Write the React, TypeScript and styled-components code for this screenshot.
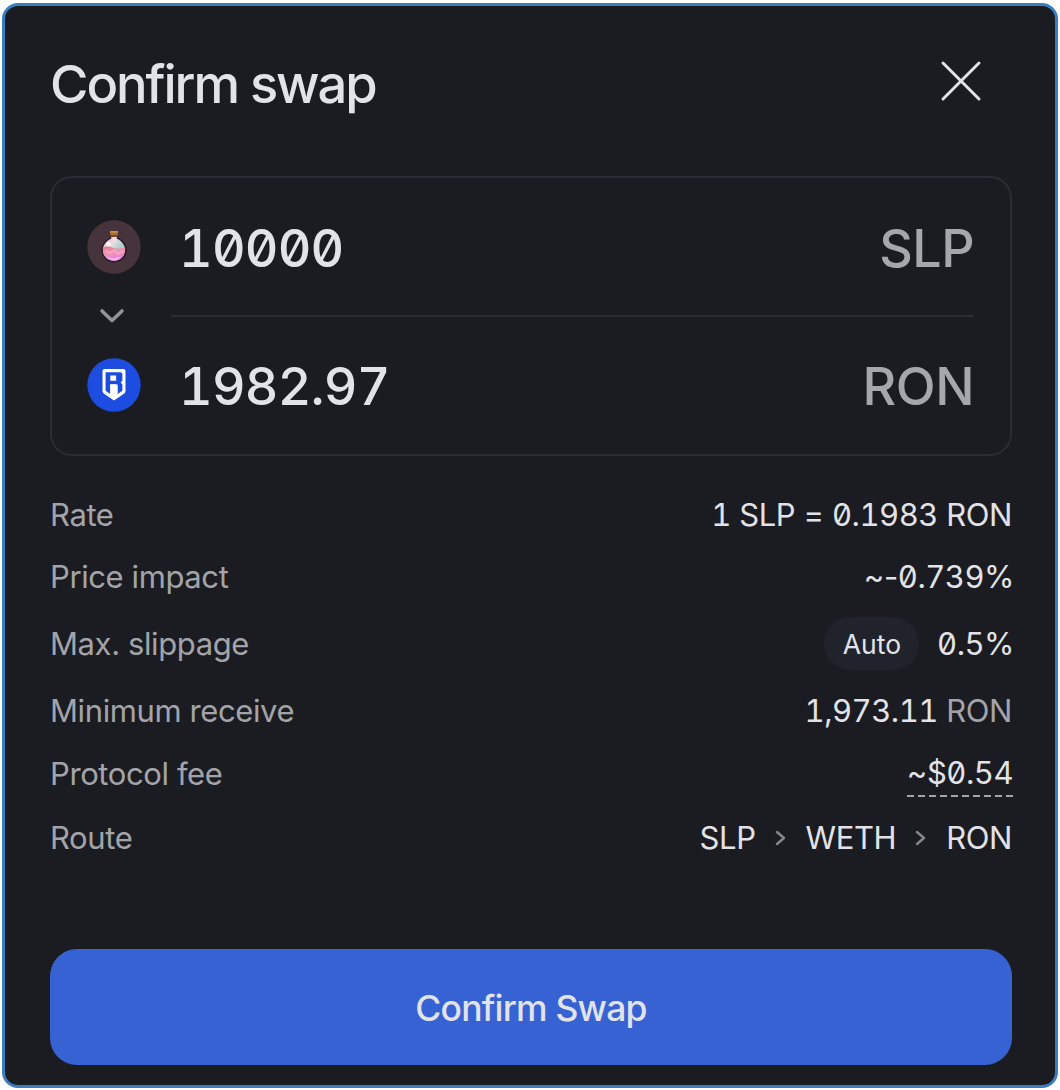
import React from "react";
import styled, { createGlobalStyle } from "styled-components";

const GlobalStyle = createGlobalStyle`
  * {
    box-sizing: border-box;
  }
  body {
    margin: 0;
    background: #fff;
    font-family: "Inter", sans-serif;
    color: #e2e3e8;
  }
`;

interface TokenProps {
  icon: React.ReactNode;
  amount: string;
  symbol: string;
}

function Token(props: TokenProps) {
  return (
    <TokenRow>
      {props.icon}
      <Amount>{props.amount}</Amount>
      <Symbol>{props.symbol}</Symbol>
    </TokenRow>
  );
}

interface DetailProps {
  label: string;
  height?: number;
  children: React.ReactNode;
}

function Detail(props: DetailProps) {
  return (
    <DetailRow $height={props.height}>
      <Label>{props.label}</Label>
      <Value>{props.children}</Value>
    </DetailRow>
  );
}

function SlpIcon() {
  return (
    <TokenIcon viewBox="0 0 54 54">
      <defs>
        <linearGradient id="glass" x1="0" y1="0" x2="1" y2="1">
          <stop offset="0" stopColor="#f3a9bd" />
          <stop offset="0.35" stopColor="#f0dfe6" />
          <stop offset="0.6" stopColor="#a9d3cb" />
          <stop offset="1" stopColor="#e9a8cf" />
        </linearGradient>
        <linearGradient id="potion" x1="0" y1="0" x2="0.3" y2="1">
          <stop offset="0" stopColor="#e8798d" />
          <stop offset="0.45" stopColor="#f094b4" />
          <stop offset="1" stopColor="#ee7fdb" />
        </linearGradient>
      </defs>
      <circle cx="27" cy="27" r="26.7" fill="#46333b" />
      <path
        d="M23.5 15h7v2.500c5 2.500 9.300 6.800 9.300 12.500 0 7-5.700 12.400-12.800 12.400S14.500 37 14.500 30c0-5.700 4-10 9-12.500z"
        fill="#261b28"
      />
      <path
        d="M24.300 16h5.400v2.500c4.800 2.300 8.400 6.300 8.400 11.300 0 6.200-4.900 11-11.100 11s-11.100-4.800-11.100-11c0-5 3.600-9 8.400-11.300z"
        fill="url(#glass)"
      />
      <path
        d="M16 27.500c3-1.500 6.600-1 10 .3s8 1.300 12-.8c1 7.700-4.200 13.800-11 13.800S15 35.300 16 27.500z"
        fill="url(#potion)"
      />
      <path d="M18 30.500l5 2.500 4-3 4 4 5-3" fill="none" stroke="#f7b4bd" strokeWidth="1.2" />
      <path d="M21 37.500c3.500 2.500 8.500 2 11.500-.2" fill="none" stroke="#fac5f2" strokeWidth="1.5" />
      <circle cx="21.5" cy="24" r="2" fill="#fff" />
      <path d="M23.200 11h7.600v4.500h-7.600z" fill="#a66c32" />
      <path d="M23.200 11h7.600v1.800h-7.600z" fill="#c88b48" />
      <path d="M24.300 15.500h5.400v1.500h-5.400z" fill="#6d4932" />
    </TokenIcon>
  );
}

function RonIcon() {
  return (
    <TokenIcon viewBox="0 0 54 54">
      <circle cx="27" cy="27" r="26.7" fill="#1c4de0" />
      <path d="M17.500 11h19a2 2 0 0 1 2 2v20a3 3 0 0 1-1.200 2.400L27 42.500l-10.300-7.100a3 3 0 0 1-1.200-2.400V13a2 2 0 0 1 2-2z" fill="#fff" />
      <path d="M18.600 32.800V14.200h14.600a2.200 2.200 0 0 1 2.200 2.200v6.100l-1.700 2 1.700 2v6.300l-4.700 3.200v-9.600H23.300V36z" fill="#1c4de0" />
      <path d="M23.300 17.600h5.800v5.200h-5.800zM23.300 26.200h5.800V38h-5.800z" fill="#fff" />
    </TokenIcon>
  );
}

function RouteArrow() {
  return (
    <ArrowIcon viewBox="0 0 12 18">
      <path d="M2 3l7 6-7 6" />
    </ArrowIcon>
  );
}

function App() {
  return (
    <>
      <GlobalStyle />
      <Modal>
        <Header>
          <Title>Confirm swap</Title>
          <Close aria-label="Close">
            <svg viewBox="0 0 42 42">
              <path d="M3 3l36 36M39 3L3 39" />
            </svg>
          </Close>
        </Header>

        <SwapBox>
          <Token icon={<SlpIcon />} amount="10000" symbol="SLP" />
          <Separator>
            <svg viewBox="0 0 26 16">
              <path d="M3 3l10 9.500L23 3" />
            </svg>
            <Line />
          </Separator>
          <Token icon={<RonIcon />} amount="1982.97" symbol="RON" />
        </SwapBox>

        <Details>
          <Detail label="Rate">
            <Num>1</Num>&nbsp;SLP =&nbsp;<Num>0.1983</Num>&nbsp;RON
          </Detail>
          <Detail label="Price impact">
            ~-<Num $last>0.739%</Num>
          </Detail>
          <Detail label="Max. slippage" height={53}>
            <Pill>Auto</Pill>
            <Num $last>0.5%</Num>
          </Detail>
          <Detail label="Minimum receive">
            <Num>1,973.11</Num>&nbsp;<Muted>RON</Muted>
          </Detail>
          <Detail label="Protocol fee" height={47}>
            <Dashed>
              ~<Num>$0.54</Num>
            </Dashed>
          </Detail>
          <Detail label="Route">
            SLP
            <RouteArrow />
            WETH
            <RouteArrow />
            RON
          </Detail>
        </Details>

        <Submit>Confirm Swap</Submit>
      </Modal>
    </>
  );
}

const Modal = styled.div`
  display: flex;
  flex-direction: column;
  width: 1056px;
  height: 1085px;
  margin: 3px 2px 2px;
  padding: 45px 43px 20px 45px;
  border: 3px solid #3a7dc0;
  border-radius: 16px;
  background: #1b1c21;
`;

const Header = styled.div`
  display: flex;
  align-items: center;
  justify-content: space-between;
  height: 66px;
  padding-right: 30px;
`;

const Title = styled.h1`
  margin: 0;
  font-size: 52.5px;
  font-weight: 500;
  line-height: 66px;
  letter-spacing: -2.1px;
`;

const Close = styled.button`
  width: 42px;
  height: 42px;
  margin-top: -6px;
  padding: 0;
  border: 0;
  background: none;
  svg {
    display: block;
    fill: none;
    stroke: #e2e3e8;
    stroke-width: 3;
    stroke-linecap: round;
  }
`;

const SwapBox = styled.div`
  height: 280px;
  margin-top: 59px;
  padding: 37px 36px 0 35px;
  border: 2px solid #2b2c36;
  border-radius: 22px;
`;

const TokenRow = styled.div`
  display: flex;
  align-items: center;
  height: 64px;
`;

const TokenIcon = styled.svg`
  width: 54px;
  height: 54px;
`;

const Amount = styled.span`
  margin-left: 38px;
  padding-top: 4px;
  font-size: 52px;
  font-weight: 500;
  line-height: 66px;
  letter-spacing: -0.8px;
  font-feature-settings: "tnum", "zero";
`;

const Symbol = styled.span`
  margin-left: auto;
  padding-top: 4px;
  font-size: 52px;
  font-weight: 500;
  line-height: 66px;
  letter-spacing: -0.5px;
  color: #a6a7ac;
`;

const Separator = styled.div`
  display: flex;
  align-items: center;
  height: 74px;
  padding-left: 12px;
  svg {
    width: 26px;
    height: 16px;
    fill: none;
    stroke: #91929b;
    stroke-width: 3.6;
    stroke-linecap: round;
    stroke-linejoin: round;
  }
`;

const Line = styled.div`
  flex: 1;
  height: 2px;
  margin-left: 46px;
  background: #2b2c36;
`;

const Details = styled.div`
  display: flex;
  flex-direction: column;
  gap: 18.2px;
  margin-top: 37px;
`;

const DetailRow = styled.div<{ $height?: number }>`
  display: flex;
  align-items: center;
  justify-content: space-between;
  height: ${(props) => props.$height || 44}px;
  font-size: 31px;
  line-height: 44px;
  letter-spacing: -0.4px;
`;

const Label = styled.span`
  color: #a3a4a9;
`;

const Value = styled.span`
  display: flex;
  align-items: center;
`;

const Num = styled.span<{ $last?: boolean }>`
  margin-right: ${(props) => (props.$last ? -2 : 0)}px;
  letter-spacing: -0.5px;
  font-feature-settings: "tnum", "zero";
`;

const Pill = styled.span`
  height: 53px;
  margin-right: 18px;
  padding: 1px 18px 0 19px;
  border-radius: 27px;
  background: #21232c;
  font-size: 26.5px;
  line-height: 53px;
  letter-spacing: 0;
`;

const Muted = styled.span`
  color: #a3a4a9;
`;

const Dashed = styled.span`
  margin-right: -1px;
  padding-bottom: 2px;
  background: repeating-linear-gradient(90deg, #a3a4a9 0 7px, transparent 7px 11px) 0 100% / 100% 2px
    no-repeat;
`;

const ArrowIcon = styled.svg`
  width: 12px;
  height: 18px;
  margin: 0 19px;
  fill: none;
  stroke: #85868f;
  stroke-width: 2.4;
  stroke-linecap: round;
  stroke-linejoin: round;
`;

const Submit = styled.button`
  height: 116px;
  margin-top: auto;
  padding: 2px 0 0;
  border: 0;
  border-radius: 27px;
  background: #3662d3;
  color: #e2e3e8;
  font-family: inherit;
  font-size: 35.5px;
  font-weight: 500;
  letter-spacing: -0.8px;
`;

export default App;
